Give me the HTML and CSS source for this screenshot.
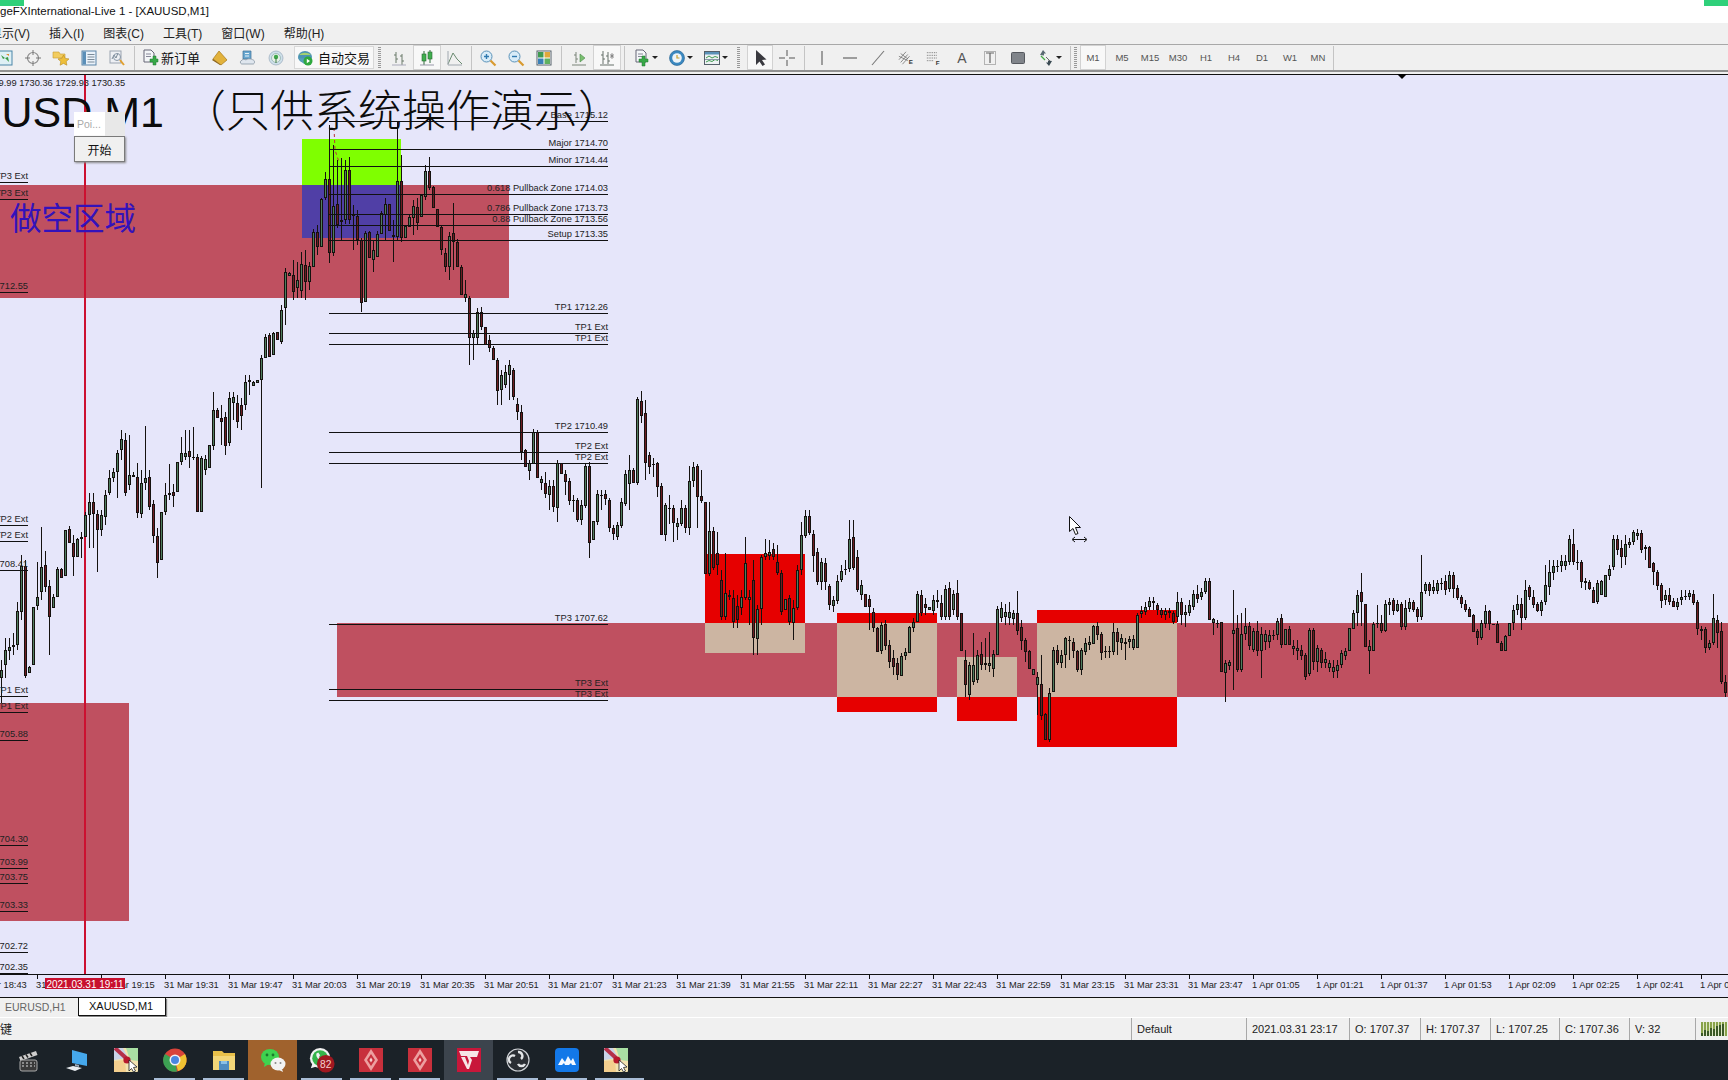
FILE: index.html
```html
<!DOCTYPE html>
<html lang="zh-CN">

<head>
  <meta charset="UTF-8">
  <title>XAUUSD,M1</title>
  <link rel="stylesheet" href="styles.css">
</head>

<body>
  <svg class="defs" width="0" height="0">
    <symbol id="map" viewBox="0 0 24 24">
      <rect width="24" height="24" rx="1" fill="#f3e3b0" />
      <path d="M0 0h9l5 10L0 12z" fill="#c9d3e8" />
      <path d="M12 0h12v13l-8-1z" fill="#a9e0a4" />
      <path d="M0 13l11-1 1 12H0z" fill="#f4cf8e" />
      <path d="M1 0l11 10" stroke="#b5314a" stroke-width="4" />
      <circle cx="13" cy="12" r="3.6" fill="#b8192d" />
      <path d="M15 12l0 11 2.500-2.500 2 3.500 2-1-2-3.500 3.500-.5z" fill="#fff" stroke="#222" stroke-width=".8" />
    </symbol>
    <symbol id="gem" viewBox="0 0 24 24">
      <rect width="24" height="24" fill="#c8303c" />
      <path d="M12 1l7 11-7 11-7-11z" fill="#eda0a0" />
      <path d="M12 6l4 6-4 6-4-6z" fill="#c8303c" />
      <path d="M12 9.500l1.600 2.500-1.600 2.500-1.600-2.500z" fill="#f6d0d0" />
    </symbol>
  </svg>

  <div class="app">
    <div class="progress progress-left"></div>
    <div class="progress progress-right"></div>
    <div class="titlebar">geFXInternational-Live 1 - [XAUUSD,M1]</div>

    <nav class="menubar">
      <span class="menu-first">显示(V)</span>
      <span>插入(I)</span>
      <span>图表(C)</span>
      <span>工具(T)</span>
      <span>窗口(W)</span>
      <span>帮助(H)</span>
    </nav>

    <div class="toolbar">
      <span class="tb tb-first"><svg class="ic" viewBox="0 0 16 16"><rect x="1" y="1" width="14" height="14" fill="#dff0f5" stroke="#4a86a8" /><path d="M4 5l4 3-2 1zM12 12L8 8l3-1z" fill="#3a9a45" /><path d="M9 4h3v2z" fill="#e08a2a" /></svg></span>
      <span class="tb"><svg class="ic" viewBox="0 0 16 16"><circle cx="8" cy="8" r="5.500" fill="none" stroke="#8a8a8a" stroke-width="1.200" /><path d="M8 0v5M8 11v5M0 8h5M11 8h5" stroke="#777" /></svg></span>
      <span class="tb"><svg class="ic" viewBox="0 0 16 16"><path d="M0 2h6l1 2h5v4H0z" fill="#f2cc5e" stroke="#c69a30" stroke-width=".6" /><path d="M10.500 5l1.700 3.400 3.800.5-2.800 2.600.7 3.700-3.400-1.800-3.400 1.800.7-3.700L5 8.900l3.800-.5z" fill="#eebf3a" stroke="#b78a1f" stroke-width=".6" /></svg></span>
      <span class="tb"><svg class="ic" viewBox="0 0 16 16"><rect x="1" y="1" width="14" height="14" fill="#eaf2fa" stroke="#5b84a8" /><rect x="1.500" y="1.500" width="3.500" height="13" fill="#5b8fb8" /><path d="M6.500 4.500h7M6.500 7h7M6.500 9.500h7M6.500 12h7" stroke="#7a8a98" /></svg></span>
      <span class="tb"><svg class="ic" viewBox="0 0 16 16"><rect x="1" y="1" width="11" height="12" fill="#eef0f4" stroke="#9aa3b0" /><path d="M3 9l2-4 2 3 2-5" fill="none" stroke="#7a8a98" /><circle cx="8" cy="7" r="3.500" fill="none" stroke="#8a98a8" /><path d="M11 10l4 5" stroke="#e0a030" stroke-width="2" /></svg></span>
      <span class="sep"></span>
      <span class="tb-text"><svg class="ic" viewBox="0 0 16 16"><path d="M2 0h7l3 3v9H2z" fill="#f4f6f8" stroke="#667" /><path d="M4 4h5M4 6.500h5" stroke="#889" /><path d="M8 9h3V6h3v3h2v3h-2v3h-3v-3H8z" fill="#38a848" stroke="#1d7a2e" stroke-width=".5" /></svg><span>新订单</span></span>
      <span class="tb"><svg class="ic" viewBox="0 0 16 16"><path d="M7 1l8 9-6 5-8-6z" fill="#e2b23c" stroke="#a67818" stroke-width=".7" /><path d="M1 9l8 6-1 0-8-5z" fill="#8a6014" /></svg></span>
      <span class="tb"><svg class="ic" viewBox="0 0 16 16"><path d="M3 1h8v8H3z" fill="#6aa8d0" stroke="#3a6e96" stroke-width=".7" /><path d="M5 3.500h4M5 6h4" stroke="#e8f2f8" /><path d="M1 11c1-2 4-2 5-1 2-2 6-1 7 0 2 0 2 4 0 4H2c-2 0-2-3-1-3z" fill="#dfe6ee" stroke="#7a8a98" stroke-width=".7" /></svg></span>
      <span class="tb"><svg class="ic" viewBox="0 0 16 16"><circle cx="8" cy="8" r="7" fill="#cfe0ea" stroke="#9ab" stroke-width=".7" /><circle cx="8" cy="8" r="4.500" fill="#e6f0e6" stroke="#8aa" stroke-width=".7" /><circle cx="8" cy="7" r="2.200" fill="#3fa64a" /><path d="M7.500 8h1v5h-1z" fill="#3a7a40" /></svg></span>
      <span class="tb-auto"><svg class="ic" viewBox="0 0 16 16"><ellipse cx="8" cy="7" rx="7" ry="6" fill="#4b93b4" /><path d="M2 5c3-3 9-3 12 0" fill="#a4d070" /><path d="M1 8l6 6h6V9z" fill="#57a0b8" /><circle cx="11" cy="11" r="4.500" fill="#2ea83e" /><path d="M9.800 8.800l3.200 2.200-3.200 2.200z" fill="#fff" /></svg><span>自动交易</span></span>
      <span class="grip"></span>
      <span class="tb"><svg class="ic" viewBox="0 0 16 16"><path d="M5 2v11M3 5h2M5 9h2M11 4v11M9 6h2M11 11h2" fill="none" stroke="#6a7a6a" /><path d="M1 15h14" stroke="#aab" /></svg></span>
      <span class="tb tb-on"><svg class="ic" viewBox="0 0 16 16"><path d="M5 1v14M11 0v13" stroke="#2f6a3a" /><rect x="3" y="4" width="4" height="7" fill="#3fae4e" stroke="#2a6a34" stroke-width=".6" /><rect x="9" y="2" width="4" height="7" fill="#3fae4e" stroke="#2a6a34" stroke-width=".6" /><path d="M1 15h14" stroke="#99a" /></svg></span>
      <span class="tb"><svg class="ic" viewBox="0 0 16 16"><path d="M1 14l5-11 4 6 5 5" fill="none" stroke="#6a8a70" /><path d="M1 1v14h14" fill="none" stroke="#a0a8b0" /></svg></span>
      <span class="sep sep-tight"></span>
      <span class="tb"><svg class="ic" viewBox="0 0 16 16"><circle cx="6.500" cy="6.500" r="5.500" fill="#d8ecf8" stroke="#5a92b8" /><path d="M4 6.500h5M6.500 4v5" stroke="#2f7ab0" stroke-width="1.400" /><path d="M10.500 10.500l5 5" stroke="#d89a30" stroke-width="2.200" /></svg></span>
      <span class="tb"><svg class="ic" viewBox="0 0 16 16"><circle cx="6.500" cy="6.500" r="5.500" fill="#d8ecf8" stroke="#5a92b8" /><path d="M4 6.500h5" stroke="#2f7ab0" stroke-width="1.400" /><path d="M10.500 10.500l5 5" stroke="#d89a30" stroke-width="2.200" /></svg></span>
      <span class="tb"><svg class="ic" viewBox="0 0 16 16"><rect x="1" y="1" width="14" height="14" fill="#fff" stroke="#55606a" /><rect x="2" y="2" width="5.500" height="5.500" fill="#3f9a50" /><rect x="8.500" y="2" width="5.500" height="5.500" fill="#e0a83a" /><rect x="2" y="8.500" width="5.500" height="5.500" fill="#3a80b8" /><rect x="8.500" y="8.500" width="5.500" height="5.500" fill="#5fb060" /></svg></span>
      <span class="sep"></span>
      <span class="tb"><svg class="ic" viewBox="0 0 16 16"><path d="M5 2v11M3 5h2M5 9h2M1 15h14" fill="none" stroke="#7a8478" /><path d="M9 4l5 4-5 4z" fill="#7ac070" stroke="#4a8a4a" stroke-width=".6" /></svg></span>
      <span class="tb tb-on"><svg class="ic" viewBox="0 0 16 16"><path d="M4 1v13M2 5h2M4 9h2M9 2v12M7 6h2M9 11h2M1 15h14" fill="none" stroke="#66706a" /><path d="M13 3v6M11 6h4M11.500 4l3 4M14.500 4l-3 4" stroke="#777" stroke-width=".7" /></svg></span>
      <span class="sep"></span>
      <span class="tb-drop"><svg class="ic" viewBox="0 0 16 16"><path d="M2 0h7l3 3v9H2z" fill="#f4f6f8" stroke="#667" /><path d="M4 4h5M4 6.500h5" stroke="#889" /><path d="M5 9h3V6h3v3h3v3h-3v4H8v-4H5z" fill="#38a848" stroke="#1d7a2e" stroke-width=".5" /></svg><i class="caret"></i></span>
      <span class="tb-drop"><svg class="ic" viewBox="0 0 16 16"><circle cx="8" cy="8" r="7.500" fill="#3a88c0" stroke="#23608e" stroke-width=".6" /><circle cx="8" cy="8" r="4.800" fill="#eef4f8" /><path d="M8 5v3h2.500" fill="none" stroke="#c8a030" stroke-width="1.200" /></svg><i class="caret"></i></span>
      <span class="tb-drop"><svg class="ic" viewBox="0 0 16 16"><rect x="0.500" y="1.500" width="15" height="13" fill="#eef2f4" stroke="#55606a" /><rect x="1" y="2" width="14" height="2.500" fill="#5a92b8" /><path d="M2 8l3-2 3 2 3-1.500 3 1M2 12l3-1.500 3 1 3-2 3 1" fill="none" stroke="#3f9a50" /><path d="M1 9.500h14" stroke="#8a98a8" /></svg><i class="caret"></i></span>
      <span class="grip"></span>
      <span class="tb tb-on tb-cursor"><svg class="ic" viewBox="0 0 16 16"><path d="M4 0v15l3.500-3.500 3 4.500 2.500-1.500-3-4.500 4.500-.5z" fill="#3a3a40" /></svg></span>
      <span class="tb"><svg class="ic" viewBox="0 0 16 16"><path d="M8 0v6M8 10v6M0 8h6M10 8h6" stroke="#555" /></svg></span>
      <span class="sep"></span>
      <span class="tb"><svg class="ic" viewBox="0 0 16 16"><path d="M8 1v14" stroke="#666" stroke-width="1.200" /></svg></span>
      <span class="tb"><svg class="ic" viewBox="0 0 16 16"><path d="M1 8h14" stroke="#666" stroke-width="1.200" /></svg></span>
      <span class="tb"><svg class="ic" viewBox="0 0 16 16"><path d="M2 15L14 1" stroke="#777" stroke-width="1.100" /></svg></span>
      <span class="tb"><svg class="ic" viewBox="0 0 18 16"><path d="M1 10l8-9M3 13l8-9M5 15l8-9M1 6l10 5M3 3l8 6" fill="none" stroke="#666" stroke-width=".8" /><text class="tb-letter" x="12" y="15">E</text></svg></span>
      <span class="tb"><svg class="ic" viewBox="0 0 18 16"><path d="M1 2h12M1 5h12M1 8h12M1 11h8" stroke="#666" stroke-dasharray="1 1" /><text class="tb-letter" x="11" y="16">F</text></svg></span>
      <span class="tb tb-glyph">A</span>
      <span class="tb"><svg class="ic" viewBox="0 0 16 16"><rect x="2.500" y="1.500" width="11" height="13" fill="none" stroke="#777" stroke-dasharray="1 1" /><path d="M4 3h8M8 3v10" stroke="#666" stroke-width="1.200" /></svg></span>
      <span class="tb"><svg class="ic" viewBox="0 0 16 16"><rect x="1.500" y="2.500" width="13" height="11" rx="1" fill="#80848a" stroke="#55585e" /></svg></span>
      <span class="tb-drop"><svg class="ic" viewBox="0 0 16 16"><path d="M5 0l3 3.500-2 0v2L2 5z" fill="#5a6a72" /><path d="M3 6l4 4" stroke="#4a4" stroke-width="1.200" /><path d="M11 16l-3-3.500 2 0v-2l4 .5z" fill="#3a4a52" /><path d="M8 7l4 4" stroke="#666" /></svg><i class="caret"></i></span>
      <span class="sep"></span>
      <span class="grip grip-tight"></span>
      <span class="period period-on">M1</span>
      <span class="period">M5</span>
      <span class="period">M15</span>
      <span class="period">M30</span>
      <span class="period">H1</span>
      <span class="period">H4</span>
      <span class="period">D1</span>
      <span class="period">W1</span>
      <span class="period">MN</span>
      <span class="sep sep-end"></span>
    </div>

    <div class="chart-wrap">
      <svg id="chart" class="chart" viewBox="0 74 1728 923" width="1728" height="923"></svg>
      <div class="dialog">
        <div class="dialog-head"><span>Poi...</span><i class="dialog-close"></i></div>
        <button class="dialog-btn" type="button">开始</button>
      </div>
    </div>

    <div class="tabs">
      <span class="tab">EURUSD,H1</span>
      <span class="tab tab-on">XAUUSD,M1</span>
    </div>

    <div class="statusbar">
      <span class="status-hint">键</span>
      <span class="status-cell w-115">Default</span>
      <span class="status-cell w-103">2021.03.31 23:17</span>
      <span class="status-cell w-71">O: 1707.37</span>
      <span class="status-cell w-70">H: 1707.37</span>
      <span class="status-cell w-69">L: 1707.25</span>
      <span class="status-cell w-70">C: 1707.36</span>
      <span class="status-cell w-66">V: 32</span>
      <span class="status-cell status-net"><svg width="26" height="14" viewBox="0 0 26 14"><rect width="26" height="14" fill="#dfe8c8" /><path d="M1 0v14M4 0v14M7 0v14M10 0v14M13 0v14M16 0v14M19 0v14M22 0v14M25 0v14" stroke="#6c8a20" stroke-width="1.500" /><path d="M1 14V11M4 14V8M7 14V9M10 14V6M13 14V7M16 14V4M19 14V3M22 14V2" stroke="#20401c" stroke-width="1.500" /></svg></span>
    </div>

    <footer class="taskbar">
      <span class="task"><svg class="task-ic" viewBox="0 0 24 24"><path d="M3 9l17-6 1.500 4-17 6z" fill="#cfcfcf" /><path d="M6 8l2 3M10 6.500l2 3M14 5l2 3" stroke="#222" stroke-width="1.500" /><rect x="4" y="12" width="17" height="11" rx="2" fill="#3a3a3a" stroke="#aaa" /><path d="M6 15h13M6 18h13" stroke="#ddd" stroke-dasharray="2 2" /></svg></span>
      <span class="task"><svg class="task-ic" viewBox="0 0 24 24"><path d="M7 2l15 4v12l-15-3z" fill="#45a8ec" /><path d="M10 16l4 1v2l-4-1z" fill="#9ab" /><path d="M1 20l7-2 9 2-7 3z" fill="#e8ecf0" /></svg></span>
      <span class="task"><svg class="task-ic" viewBox="0 0 24 24"><use href="#map" /></svg></span>
      <span class="task task-pin"><svg class="task-ic" viewBox="0 0 24 24"><circle cx="12" cy="12" r="11.500" fill="#d8433a" /><path d="M12 12L22 6a11.500 11.500 0 0 1-7 17z" fill="#f0c232" /><path d="M12 12L2 6a11.500 11.500 0 0 0 12 17.500z" fill="#3ca153" /><circle cx="12" cy="12" r="5.500" fill="#f2f2f2" /><circle cx="12" cy="12" r="4" fill="#4a86e0" /></svg></span>
      <span class="task task-pin"><svg class="task-ic" viewBox="0 0 24 24"><path d="M1 3h9l2 2h11v15H1z" fill="#e8c04a" /><rect x="1" y="8" width="22" height="14" fill="#f2d678" /><rect x="7" y="13" width="10" height="9" fill="#4f8cc0" /><rect x="9" y="13" width="6" height="3" fill="#8ac0e6" /></svg></span>
      <span class="task task-wechat"><svg class="task-ic task-ic-wide" viewBox="0 0 26 24"><ellipse cx="10" cy="9" rx="9" ry="8" fill="#3fd24f" /><path d="M5 14l-1 5 5-3z" fill="#3fd24f" /><circle cx="7" cy="7" r="1.400" fill="#1a7a2c" /><circle cx="13" cy="7" r="1.400" fill="#1a7a2c" /><ellipse cx="18" cy="16" rx="7.500" ry="6.500" fill="#f2f2f2" /><path d="M22 21l1 3-4-2z" fill="#f2f2f2" /><circle cx="15.500" cy="15" r="1" fill="#888" /><circle cx="20.500" cy="15" r="1" fill="#888" /></svg></span>
      <span class="task task-pin"><svg class="task-ic task-ic-wide" viewBox="0 0 28 28"><circle cx="12" cy="12" r="11" fill="#f2f2f2" /><circle cx="12" cy="12" r="8.500" fill="#35b34a" /><path d="M2 23l2-6 4 4z" fill="#f2f2f2" /><path d="M8 7c-1 4 3 8 8 9l2-2-3-2-1 1c-2-1-3-2-3-3l1-1-2-3z" fill="#f2f2f2" /><circle cx="18" cy="18" r="9.500" fill="#a01820" /><text class="badge" x="18" y="22.500">82</text></svg></span>
      <span class="task task-pin"><svg class="task-ic" viewBox="0 0 24 24"><use href="#gem" /></svg></span>
      <span class="task task-pin"><svg class="task-ic" viewBox="0 0 24 24"><use href="#gem" /></svg></span>
      <span class="task task-active"><svg class="task-ic" viewBox="0 0 24 24"><rect width="24" height="24" fill="#c8173a" /><path d="M2 3h20l-2 6h-7l2 3-3 9h-2L4 9h4l3 8 1-4-2-5H4z" fill="#f6e6e6" /></svg></span>
      <span class="task task-pin"><svg class="task-ic" viewBox="0 0 24 24"><circle cx="12" cy="12" r="11" fill="#2a2e33" stroke="#cfd2d6" stroke-width="1.200" /><path d="M12 4a4 4 0 0 1 3 7M19 16a4 4 0 0 1-7 0M5 15a4 4 0 0 1 4-7" fill="none" stroke="#e4e6e8" stroke-width="2.400" /></svg></span>
      <span class="task task-pin"><svg class="task-ic" viewBox="0 0 24 24"><rect width="24" height="24" rx="4" fill="#1378e8" /><path d="M3 17l4-7 3 4 3-6 3 5 2-3 3 7h-4l-1-2-2 2h-4l-1-2-2 2z" fill="#f4f8ff" /></svg></span>
      <span class="task task-pin task-end"><svg class="task-ic" viewBox="0 0 24 24"><use href="#map" /></svg></span>
    </footer>
  </div>

  <script src="chart.js"></script>
</body>

</html>
```

FILE: styles.css
```css
body {
  margin: 0;
  overflow: hidden;
  background-color: #1b2228;
  font-family: "Liberation Sans", "Noto Sans CJK SC", sans-serif;
  color: #111;
}

.defs {
  position: absolute;
}

.app {
  position: relative;
  display: flex;
  flex-direction: column;
  width: 1728px;
  height: 1080px;
  overflow: hidden;
}

.progress {
  position: absolute;
  top: 0;
  height: 6px;
  width: 24px;
  background-color: #2fd07a;
}

.progress-left {
  left: 0;
}

.progress-right {
  right: 0;
}

.titlebar {
  height: 23px;
  line-height: 23px;
  background-color: #fff;
  font-size: 11.5px;
  white-space: nowrap;
}

.menubar {
  display: flex;
  gap: 19px;
  align-items: center;
  height: 21px;
  padding-bottom: 3px;
  box-sizing: border-box;
  background-color: #f0f0f0;
  font-size: 12px;
  color: #222;
  white-space: nowrap;
}

.menu-first {
  margin-left: -10px;
}

.toolbar {
  display: flex;
  flex: none;
  align-items: center;
  height: 25px;
  background-color: #f0f0f0;
  border-top: 1px solid #a8a8a8;
  border-bottom: 2px solid #909090;
  white-space: nowrap;
  margin-bottom: 2px;
  box-shadow: 0 2px 0 #f0f0f0;
}

.tb {
  display: flex;
  flex: none;
  align-items: center;
  justify-content: center;
  width: 28px;
  height: 25px;
  box-sizing: border-box;
}

.tb-first {
  margin-left: -9px;
}

.tb-on {
  background-color: #f8f8f8;
  border: 1px solid #d2d2d2;
}

.tb-cursor {
  width: 26px;
  margin-left: 3px;
}

.tb-glyph {
  font-size: 14px;
  color: #555;
}

.tb-letter {
  font-size: 7px;
  font-weight: bold;
  fill: #333;
}

.ic {
  display: block;
  width: 16px;
  height: 16px;
  overflow: visible;
}

.sep {
  flex: none;
  width: 1px;
  height: 24px;
  margin: 0 3px;
  background-color: #c4c4c4;
}

.sep-tight {
  margin: 0 2px;
}

.sep-end {
  margin: 0 0 0 1px;
}

.tb-text {
  display: flex;
  flex: none;
  align-items: center;
  gap: 3px;
  width: 68px;
  box-sizing: border-box;
  padding-left: 4px;
  font-size: 13px;
}

.tb-auto {
  display: flex;
  flex: none;
  align-items: center;
  gap: 5px;
  width: 80px;
  height: 23px;
  margin-left: 4px;
  padding-left: 2px;
  box-sizing: border-box;
  background-color: #f8f8f8;
  border: 1px solid #d8d8d8;
  font-size: 13px;
}

.grip {
  flex: none;
  width: 3px;
  height: 22px;
  margin: 0 4px 0 4px;
  background-image: repeating-linear-gradient(to bottom, #999 0 1px, #f0f0f0 1px 2px);
}

.grip-tight {
  margin: 0 3px 0 0;
}

.tb-drop {
  display: flex;
  flex: none;
  align-items: center;
  width: 35px;
  padding-left: 6px;
  box-sizing: border-box;
}

.caret {
  margin-left: 2px;
  border-top: 3px solid #222;
  border-left: 3px solid transparent;
  border-right: 3px solid transparent;
}

.period {
  display: flex;
  flex: none;
  align-items: center;
  justify-content: center;
  width: 28px;
  height: 25px;
  box-sizing: border-box;
  font-size: 9.500px;
  color: #555;
}

.period-on {
  width: 26px;
  margin-right: 2px;
  background-color: #f8f8f8;
  border: 1px solid #d2d2d2;
}

.chart-wrap {
  position: relative;
  flex: none;
  height: 923px;
  background-color: #e6e6fa;
}

.chart {
  display: block;
}

.zone {
  fill: #bf5060;
}

.zone-red {
  fill: #e60000;
}

.zone-tan {
  fill: #ccb5a2;
}

.zone-lime {
  fill: #7fff00;
}

.zone-violet {
  fill: #503fa6;
}

.cursor-line {
  fill: #cc1030;
}

.wicks {
  fill: #15120f;
}

.body-up {
  fill: #4f7d5e;
}

.body-down {
  fill: #6e1c22;
}

.lvl {
  stroke: #111;
  stroke-width: 1;
  shape-rendering: crispEdges;
}

.lvl-text,
.axis-text,
.ohlc {
  font-size: 9.300px;
  fill: #222;
}

.lvl-text {
  text-anchor: end;
}

.big-title {
  font-size: 43px;
  fill: #0c0c0c;
}

.big-title-cjk {
  font-family: "Noto Sans CJK SC", sans-serif;
  font-size: 44px;
  font-weight: 300;
  fill: #0c0c0c;
}

.zone-text {
  font-size: 31.500px;
  fill: #3312bb;
}

.axis-time {
  fill: #c8102e;
}

.axis-time-text {
  font-size: 10px;
  fill: #fff;
  text-anchor: middle;
}

.mouse {
  fill: #fff;
  stroke: #111;
  stroke-width: 1;
}

.mouse-size {
  fill: none;
  stroke: #111;
  stroke-width: 1;
}

.dash {
  fill: none;
  stroke: #b8323a;
  stroke-dasharray: 3 3;
}

.dialog {
  position: absolute;
  left: 74px;
  top: 38px;
  width: 51px;
  background-color: #fff;
}

.dialog-head {
  display: flex;
  align-items: center;
  justify-content: space-between;
  height: 24px;
  padding-left: 3px;
  font-size: 10.500px;
  color: #aaa;
}

.dialog-close {
  width: 20px;
  height: 24px;
  background-color: #e8e8e8;
}

.dialog-btn {
  display: block;
  width: 51px;
  height: 26px;
  padding: 0;
  background-color: #f0f0f0;
  border: 1px solid #7a7a7a;
  box-shadow: 1px 1px 2px #8a8a8a;
  font-family: "Noto Sans CJK SC", sans-serif;
  font-size: 12px;
  color: #111;
}

.tabs {
  display: flex;
  flex: none;
  height: 20px;
  background-color: #f0f0f0;
  border-top: 1px solid #111;
  box-sizing: border-box;
  font-size: 11px;
}

.tab {
  width: 78px;
  padding-left: 5px;
  box-sizing: border-box;
  font-size: 10.500px;
  line-height: 18px;
  color: #666;
}

.tab-on {
  width: 88px;
  height: 18px;
  padding-left: 10px;
  background-color: #fff;
  border: 1px solid #111;
  border-top: 0;
  box-shadow: 1px 1px 1px #888;
  font-size: 11px;
  line-height: 17px;
  color: #111;
}

.statusbar {
  display: flex;
  flex: none;
  height: 23px;
  background-color: #f0f0f0;
  border-top: 1px solid #fff;
  box-sizing: border-box;
  font-size: 11px;
  color: #222;
}

.status-hint {
  width: 1131px;
  flex: none;
  font-family: "Noto Sans CJK SC", sans-serif;
  line-height: 22px;
  font-size: 12px;
}

.status-cell {
  display: flex;
  flex: none;
  align-items: center;
  padding-left: 5px;
  box-sizing: border-box;
  border-left: 1px solid #a8a8a8;
  white-space: nowrap;
}

.w-115 {
  width: 115px;
}

.w-103 {
  width: 103px;
}

.w-71 {
  width: 71px;
}

.w-70 {
  width: 70px;
}

.w-69 {
  width: 69px;
}

.w-66 {
  width: 66px;
}

.status-net {
  flex: 1;
}

.taskbar {
  display: flex;
  flex: none;
  height: 40px;
  padding-left: 3px;
  background-color: #1b2228;
}

.task {
  position: relative;
  display: flex;
  flex: none;
  align-items: center;
  justify-content: center;
  width: 49px;
  height: 40px;
}

.task-ic {
  width: 24px;
  height: 24px;
  overflow: visible;
}

.task-ic-wide {
  width: 26px;
  height: 26px;
}

.task-pin::after {
  content: "";
  position: absolute;
  left: 4px;
  right: 4px;
  bottom: 0;
  height: 2px;
  background-color: #a9bdd6;
}

.task-end::after {
  right: -4px;
}

.task-wechat {
  background-color: #a0622d;
}

.task-active {
  background-color: #3c444d;
}

.badge {
  font-size: 11px;
  fill: #f4d0d0;
  text-anchor: middle;
}
```

FILE: chart.js
```js
// candles as [top, bottom, up(1)/down(0), wickHigh, wickLow], one every 4px. runs start at a known x
const runs = [
  [1, [
    [670,678,1,660,703],[650,665,1,638,678],[647,651,1,638,660],[645,647,1,633,655],[611,645,1,602,650],[566,612,1,555,620],[566,676,0,560,678],[667,673,1],
    [607,665,1],[597,606,1,562,610],[567,592,1,527,600],[565,587,0,551,592],[586,617,0,580,655],[597,608,1],[569,597,1],[569,578,0],
    [530,576,1],[529,543,0],[543,557,0,535,576],[539,557,1],[537,539,1,532,558],[515,537,1],[502,515,1,493,548],[502,514,0,493,548],
    [514,530,0,510,572],[515,530,1,510,536],[495,517,1,490,525],[478,493,1,470,495],[472,478,1,468,482],[453,472,1,450,498],[439,450,1,430,460],[440,493,0,433,496],
    [475,485,1,435,490],[475,477,1],[477,513,0,463,518],[483,514,1,470,518],[478,483,1,426,490],[477,507,0,470,510],[504,536,0,500,543],[536,563,0,528,578],
    [512,560,1],[495,512,1,483,515],[493,495,1,464,500],[492,496,0,484,507],[462,492,1],[453,462,1,437,465],[453,457,1,430,460],[451,457,0,430,468],
    [457,457,1,427,460],[457,512,0],[458,512,1],[459,470,1,455,475],[445,468,1],[410,446,1,392,450],[410,418,0],[418,422,0,405,445],
    [417,446,0,412,455],[398,443,1,392,446],[397,403,1,392,420],[403,422,0,395,428],[405,416,0,398,430],[382,405,1,375,410],[380,382,1,375,395],[382,386,1],[380,383,1]
  ]],
  [261, [
    [358,380,1,355,488],[337,358,1],[335,357,0],[333,355,1],[332,340,0],[310,342,1,305,344],[272,308,1,268,325],[273,276,1],
    [275,292,0,260,300],[280,288,1,262,298],[264,291,1,252,298],[265,282,0,250,300],[266,282,1,262,290],[232,267,1],[232,247,0,225,255],[199,247,1],
    [179,198,1,172,200],[179,253,0,125,263],[206,253,1,145,256],[204,225,0,160,228],[220,222,1,158,240],[170,220,1,160,224],[170,220,0,157,224],[215,216,1,205,250],
    [216,240,0,210,245],[240,303,0,238,312],[233,302,1],[232,258,0],[250,260,1,240,272],[234,257,1],[213,234,1],[204,215,1,198,240],
    [204,231,0],[235,237,1,220,262],[181,237,1,122,240],[181,238,0,155,242],[226,238,1],[217,227,1],[206,218,1,200,235],[207,223,0,198,230],
    [195,217,1],[171,197,1,165,200],[171,188,0,157,190],[187,208,0],[209,227,0],[227,250,0,225,255],[253,267,0,248,272],[236,267,1,232,280],
    [233,242,0,203,270],[242,267,0],[267,295,0],[294,298,1,280,302],[298,338,0,296,365],[333,338,1,330,360],[312,338,1,308,345],[312,327,0,307,330],
    [327,345,0],[340,348,0,335,352],[348,360,0]
  ]],
  [497, [
    [360,391,0,358,405],[375,390,1,370,405],[372,385,1,365,388],[365,375,1,360,400],[370,397,0,368,400],[404,412,0,398,420],[412,452,0,405,460],[450,467,0],
    [463,471,1,460,480],[432,464,1],[432,478,0],[479,483,1,476,490],[483,494,0,472,498],[486,495,1,480,510],[486,507,0,480,512],[463,508,1,460,522],
    [463,474,0],[474,482,0,470,495],[481,501,0,478,505],[500,500,1,495,512],[500,520,0,498,522],[505,520,1,500,525],[466,506,1,463,508],[466,543,0,462,558],
    [521,540,1],[494,522,1,490,525],[495,495,1,490,510],[494,499,0,490,505],[500,528,0,498,532],[528,534,0,525,540],[525,537,1,522,540],[502,526,1,498,528],
    [474,504,1,470,506],[470,484,1,455,510],[470,483,0],[399,483,1,397,485],[401,416,0,391,423],[413,463,0,400,480],[455,467,0,452,474],[464,464,1,458,477],
    [463,487,0,462,497],[486,535,0],[505,535,1,503,541],[508,508,1,495,524],[508,523,0,505,542],[523,527,1,518,540],[508,524,1,500,526],[508,528,0,505,533],
    [481,528,1,466,535],[467,481,1,462,487],[466,497,0,464,528],[496,501,0,470,503]
  ]],
  [705, [
    [502,574,0],[531,574,1,502,576],[531,568,0,527,570],[553,565,0,532,575],[580,617,0,570,620],[593,617,1,553,620],[595,597,1,590,600],[598,622,0,590,628],
    [606,620,0,595,628],[597,608,1,590,615],[563,598,1,537,600],[597,600,1,590,625],[580,638,0,560,655],[609,639,1,605,655],[557,609,1,555,625],[553,557,1,539,560],
    [552,556,1,540,560],[549,557,0,543,560],[562,573,0,545,575],[573,612,0,570,615],[599,610,1],[598,622,0,595,625],[608,623,1,600,640],[570,608,1,565,610],
    [535,570,1,522,575],[516,536,1,510,538],[516,533,0,510,535],[534,556,0,530,572],[552,582,0,548,585],[562,582,1,558,590],[563,582,0,558,590],[586,605,0,584,610],
    [600,606,1,596,612],[581,601,1,575,604],[571,580,1,565,582],[569,569,1,560,575],[539,569,1,520,572],[537,568,0,520,570],[557,590,0,550,592],[585,595,1,580,600],
    [594,607,0],[599,607,0,595,630],[612,628,0,608,632],[628,652,0],[625,651,1,622,654],[624,646,0,620,650],[645,662,0,640,668],[658,667,0,650,675],
    [663,675,0,658,680],[656,676,1],[652,656,1,648,660],[627,653,1],[622,628,1,618,632],[594,622,1],[595,613,0,590,616],[604,608,0,598,615],
    [607,610,1],[600,611,1,595,615],[600,602,1,590,608],[603,617,0,595,620],[589,617,1,585,620],[588,617,0,582,620],[594,610,1,590,615],[593,617,0,580,620],
    [613,651,0],[660,685,0,650,697],[665,695,1,662,700],[665,682,1,633,685],[655,680,1,650,683],[654,665,0,642,670],[663,665,1,638,670],[663,666,1,632,672],[654,669,1,650,677],[609,655,1]
  ]],
  [1001, [
    [608,618,1,602,622],[612,617,1,604,625],[612,618,1,602,625],[613,619,1,610,625],[613,631,0,591,635],[627,641,0,620,650],[640,652,0,638,662],[651,669,0],
    [669,675,1],[677,685,1,672,715],[684,716,0,655,720],[714,740,0],[693,740,1,688,742],[650,692,1],[650,663,0,645,665],[655,663,1,650,668],
    [638,655,1,637,668],[640,641,1,636,660],[642,651,0,638,658],[651,670,0,650,672],[650,670,1,648,675],[643,652,1,638,655],[642,645,1,636,650],[626,644,1],
    [626,635,0,622,640],[634,653,0,632,660],[651,651,1,646,658],[651,651,1,646,658],[632,652,1,623,655],[632,642,0,628,655],[638,643,1,634,650],[642,644,1,638,660],
    [639,642,1,636,648],[639,648,1,635,650],[615,648,1],[611,614,1,606,618],[607,612,1,602,615],[601,607,1,597,610],[601,603,1,597,610],[605,610,0,603,615],
    [610,615,0,608,618],[611,615,1,608,620],[611,613,1,608,618],[613,622,0,611,624],[602,617,1,592,622],[602,615,0,598,625],[612,615,1,605,627]
  ]],
  [1189, [
    [605,613,1,600,616],[594,607,1,590,610],[594,599,0,585,603],[592,597,1,588,600],[581,592,1,578,594],[581,620,0],[619,623,1,618,635],[623,623,1,620,628],
    [622,672,0],[663,673,1,660,702],[662,666,1,660,670],[630,634,1,590,690],[628,670,0,615,672],[634,670,1,613,672],[626,634,1,608,640],[626,646,0,622,650],
    [631,650,1,628,652],[631,651,0,621,656],[634,651,1,627,678],[634,642,1,630,650],[635,642,1,630,648],[635,635,1,630,640],[621,635,1,618,640],[618,645,0,614,648],
    [629,645,1],[629,645,0],[646,649,1,640,655],[648,651,1,640,660],[650,656,0,645,660],[655,677,0,653,680],[630,674,1,628,676],[630,662,0,628,670],
    [648,662,1,645,672],[650,663,0,648,668],[659,663,1,652,668],[663,668,1,660,672],[667,672,1,660,678],[665,671,1,660,678],[653,665,1,650,668],[651,656,1,648,660],
    [628,651,1],[613,629,1],[595,613,1,590,626],[592,602,0,573,626],[604,647,0],[646,651,1,640,674],[624,651,1],[623,623,1,605,628],
    [623,631,0,615,633],[604,631,1,600,632],[602,605,1,598,615],[600,611,0,598,615],[604,611,1,600,612],[604,627,0,602,630],[608,627,1,600,630],[602,609,1,598,612],
    [602,610,0,600,612],[609,617,0,607,622],[592,617,1,555,620],[584,591,1,582,594],[584,591,0,582,596],[587,591,1,580,594],[583,591,1,580,594],[583,583,1,578,590],
    [581,590,0,575,595],[575,589,1,571,592],[575,589,0,572,598],[588,598,0,585,600],[597,604,0,595,608],[604,610,0,600,612],[609,617,0],[615,632,0],
    [631,638,0,629,645],[623,638,1,620,640],[611,624,1,605,628],[611,624,0,610,630],[624,624,1],[624,643,0],[643,651,0],[636,651,1],
    [623,636,1],[610,623,1,605,630],[604,610,1,595,615],[604,618,0,598,630],[590,618,1,580,620],[587,597,0,585,600],[597,605,0,590,608],[604,611,0,602,612],
    [602,611,1,600,616],[585,602,1,565,605],[572,587,1,560,595],[566,573,1,560,580],[566,566,1,560,572],[561,566,1,555,572],[561,566,1,555,570],[539,562,1,535,565],
    [544,562,0,529,565],[562,562,1,550,570],[562,582,0,560,588],[581,583,1,578,590],[582,589,0,580,590],[590,603,0],[583,602,1,580,604],[581,595,1],
    [575,597,1],[569,576,1,565,580],[539,567,1,535,570],[539,550,0,535,555],[548,557,0,540,568],[544,557,1,535,565],[542,545,1,538,548],[532,542,1,530,545],
    [533,536,1,529,540],[533,550,0,530,553],[547,549,1,545,560],[547,568,0],[563,572,0,562,585],[572,586,0,570,590],[585,601,0,583,608],[595,600,1,590,605],
    [595,602,0,588,605],[601,607,0],[602,607,1,598,610],[597,600,1,590,605],[596,596,1,590,600],[593,597,1,590,600],[594,603,0,590,605],[602,629,0,600,635],
    [629,631,1,626,640],[629,648,0,627,653],[643,648,1,640,650],[618,643,1,594,645],[620,633,0,615,648],[631,682,0,622,684],[682,693,0,675,697]
  ]]
];

const zones = [
  ['zone', 0, 185, 509, 113],
  ['zone', 337, 623, 1391, 74],
  ['zone', 0, 703, 129, 218],
  ['zone-lime', 302, 139, 99, 46],
  ['zone-violet', 302, 185, 99, 53],
  ['zone-red', 705, 554, 100, 69],
  ['zone-tan', 705, 623, 100, 30],
  ['zone-red', 837, 613, 100, 10],
  ['zone-tan', 837, 623, 100, 74],
  ['zone-red', 837, 697, 100, 15],
  ['zone-tan', 957, 657, 60, 40],
  ['zone-red', 957, 697, 60, 24],
  ['zone-red', 1037, 610, 140, 13],
  ['zone-tan', 1037, 623, 140, 74],
  ['zone-red', 1037, 697, 140, 50]
];

// fib levels drawn from x=329 to x=608
const levels = [
  [121, 'Base 1715.12'], [149, 'Major 1714.70'], [166, 'Minor 1714.44'],
  [194, '0.618 Pullback Zone 1714.03'], [214, '0.786 Pullback Zone 1713.73'], [225, '0.88 Pullback Zone 1713.56'],
  [240, 'Setup 1713.35'], [313, 'TP1 1712.26'], [333, 'TP1 Ext'], [344, 'TP1 Ext'],
  [432, 'TP2 1710.49'], [452, 'TP2 Ext'], [463, 'TP2 Ext'],
  [624, 'TP3 1707.62'], [689, 'TP3 Ext'], [700, 'TP3 Ext']
];

// the older set, cut off by the left edge
const oldLevels = [
  [182, 'TP3 Ext'], [199, 'TP3 Ext'], [292, '1712.55'], [525, 'TP2 Ext'], [541, 'TP2 Ext'], [570, '1708.41'],
  [696, 'TP1 Ext'], [712, 'TP1 Ext'], [740, '1705.88'], [845, '1704.30'], [868, '1703.99'], [883, '1703.75'],
  [911, '1703.33'], [952, '1702.72'], [973, '1702.35']
];

const times = ['31 Mar 18:43', '31 Mar 18:59', '31 Mar 19:15', '31 Mar 19:31', '31 Mar 19:47', '31 Mar 20:03', '31 Mar 20:19',
  '31 Mar 20:35', '31 Mar 20:51', '31 Mar 21:07', '31 Mar 21:23', '31 Mar 21:39', '31 Mar 21:55', '31 Mar 22:11', '31 Mar 22:27',
  '31 Mar 22:43', '31 Mar 22:59', '31 Mar 23:15', '31 Mar 23:31', '31 Mar 23:47', '1 Apr 01:05', '1 Apr 01:21', '1 Apr 01:37',
  '1 Apr 01:53', '1 Apr 02:09', '1 Apr 02:25', '1 Apr 02:41', '1 Apr 02:57'];

const svg = document.getElementById('chart');

function add(tag, attrs, text) {
  const el = document.createElementNS('http://www.w3.org/2000/svg', tag);
  Object.keys(attrs).forEach(k => el.setAttribute(k, attrs[k]));
  if (text) el.textContent = text;
  svg.appendChild(el);
  return el;
}

function box(x, y, w, h) {
  return `M${x} ${y}h${w}v${h}h${-w}z`;
}

zones.forEach(z => add('rect', { class: z[0], x: z[1], y: z[2], width: z[3], height: z[4] }));

add('rect', { class: 'cursor-line', x: 84, y: 74, width: 2, height: 900 });

// candles go into three paths, one per colour
let black = '';
let up = '';
let down = '';
runs.forEach(run => {
  run[1].forEach((c, i) => {
    const x = run[0] + i * 4;
    const high = c[3] || c[0] - (i * 7 % 4);
    const low = c[4] || c[1] + (i * 5 % 5);
    black += box(x, high, 1, low - high);
    black += box(x - 1, c[0], 3, Math.max(c[1] - c[0], 1));
    if (c[1] - c[0] > 2) {
      if (c[2]) up += box(x, c[0] + 1, 1, c[1] - c[0] - 2);
      else down += box(x, c[0] + 1, 1, c[1] - c[0] - 2);
    }
  });
});
add('path', { class: 'wicks', d: black, 'shape-rendering': 'crispEdges' });
add('path', { class: 'body-up', d: up, 'shape-rendering': 'crispEdges' });
add('path', { class: 'body-down', d: down, 'shape-rendering': 'crispEdges' });

add('path', { class: 'dash', d: 'M334 128l1 22 4 12' });

levels.forEach(l => {
  add('line', { class: 'lvl', x1: 329, x2: 608, y1: l[0] + 0.5, y2: l[0] + 0.5 });
  add('text', { class: 'lvl-text', x: 608, y: l[0] - 3 }, l[1]);
});
oldLevels.forEach(l => {
  add('line', { class: 'lvl', x1: 0, x2: 28, y1: l[0] + 0.5, y2: l[0] + 0.5 });
  add('text', { class: 'lvl-text', x: 28, y: l[0] - 3 }, l[1]);
});

add('line', { class: 'lvl', x1: 0, x2: 1728, y1: 74.5, y2: 74.5 });

add('text', { class: 'ohlc', x: -17, y: 86 }, '1729.99 1730.36 1729.93 1730.35');
add('text', { class: 'big-title', x: -87, y: 127 }, 'XAUUSD M1');
add('text', { class: 'big-title-cjk', x: 182, y: 127 }, '（只供系统操作演示）');
add('text', { class: 'zone-text', x: 10, y: 230 }, '做空区域');

// time axis
add('line', { class: 'lvl', x1: 0, x2: 1728, y1: 974.5, y2: 974.5 });
times.forEach((t, i) => {
  const x = -27 + i * 64;
  add('line', { class: 'lvl', x1: x + 0.5, x2: x + 0.5, y1: 975, y2: 979 });
  add('text', { class: 'axis-text', x: x - 1, y: 988 }, t);
});
add('rect', { class: 'axis-time', x: 45, y: 978, width: 80, height: 11 });
add('text', { class: 'axis-time-text', x: 85, y: 988 }, '2021.03.31 19:11');

// chart shift marker and the mouse pointer
add('path', { d: 'M1397 74h10l-5 5z' });
add('path', { class: 'mouse', d: 'M1069.500 516.500v15l3.500-3 2.500 6 2.500-1-2.500-6h5z' });
add('path', { class: 'mouse-size', d: 'M1073 539.500h13M1075 537l-3 2.500 3 2.500M1084 537l3 2.500-3 2.500' });
```
